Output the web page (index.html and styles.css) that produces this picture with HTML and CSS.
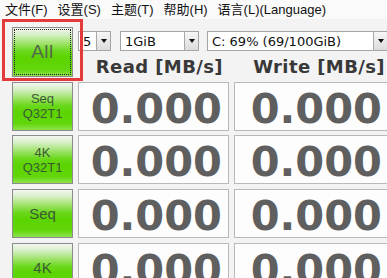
FILE: index.html
```html
<!DOCTYPE html>
<html>
<head>
<meta charset="utf-8">
<link rel="stylesheet" href="styles.css">
</head>
<body>
<div class="menubar">
  <span class="mi">文件(F)</span>
  <span class="mi">设置(S)</span>
  <span class="mi">主题(T)</span>
  <span class="mi">帮助(H)</span>
  <span class="mi">语言(L)(Language)</span>
</div>
<div class="bench">
  <div class="btn all"><span>All</span></div>
  <div class="toolbar">
    <div class="combo c1"><span class="ctext">5</span><span class="arrow"></span></div>
    <div class="combo c2"><span class="ctext">1GiB</span><span class="arrow"></span></div>
    <div class="combo c3"><span class="ctext">C: 69% (69/100GiB)</span><span class="arrow"></span></div>
  </div>
  <div class="hdr hread">Read [MB/s]</div>
  <div class="hdr hwrite">Write [MB/s]</div>

  <div class="btn two"><span>Seq<br>Q32T1</span></div>
  <div class="val vread">0.000</div>
  <div class="val vwrite">0.000</div>

  <div class="btn two"><span>4K<br>Q32T1</span></div>
  <div class="val vread">0.000</div>
  <div class="val vwrite">0.000</div>

  <div class="btn one"><span>Seq</span></div>
  <div class="val vread">0.000</div>
  <div class="val vwrite">0.000</div>

  <div class="btn one"><span>4K</span></div>
  <div class="val vread">0.000</div>
  <div class="val vwrite">0.000</div>
</div>
<div class="annot"></div>
</body>
</html>
```

FILE: styles.css
```css
html, body {
  margin: 0;
  padding: 0;
}
body {
  width: 387px;
  height: 278px;
  overflow: hidden;
  background: #f3f3f3;
  position: relative;
  font-family: "DejaVu Sans", sans-serif;
}
.menubar {
  height: 19px;
  background: #fafafa;
  display: flex;
  gap: 10px;
  padding-left: 5px;
  font-family: "Liberation Sans", "Noto Sans CJK SC", sans-serif;
  font-size: 13px;
  line-height: 19px;
  color: #111;
}
.bench {
  display: grid;
  grid-template-columns: 61px 151px 160px;
  grid-template-rows: 24px 21.33px 49px 49px 49px 49px;
  column-gap: 5px;
  row-gap: 4.67px;
  margin-left: 12px;
  margin-top: 8px;
}
.btn {
  box-sizing: border-box;
  border: 1px solid #8c8c8c;
  background: linear-gradient(to bottom, #f3f7f1 0%, #d6efc6 14%, #9fe36a 32%, #6ad81c 48%, #5cd400 62%, #62d60a 86%, #8de24c 100%);
  display: flex;
  align-items: center;
  justify-content: center;
  text-align: center;
  font-family: "Liberation Sans", sans-serif;
  color: #3b5a34;
  position: relative;
}
.all {
  grid-row: 1 / 3;
  font-size: 19px;
  color: #52694b;
  letter-spacing: 0.5px;
}
.all::after {
  content: "";
  position: absolute;
  inset: 1px;
  border: 1px dotted #222;
}
.two {
  font-size: 13px;
  line-height: 15px;
}
.one {
  font-size: 15px;
}
.toolbar {
  grid-column: 2 / 4;
  display: flex;
  align-items: flex-end;
  gap: 9px;
}
.combo {
  box-sizing: border-box;
  height: 20px;
  background: #fff;
  border: 1px solid #a4a4a4;
  display: flex;
  align-items: center;
  justify-content: space-between;
  font-family: "DejaVu Sans", sans-serif;
  font-size: 13px;
  color: #111;
  overflow: hidden;
}
.c1 { width: 33px; }
.c2 { width: 79px; margin-right: -1px; }
.c3 { width: 181px; }
.ctext {
  padding-left: 4px;
  white-space: nowrap;
}
.arrow {
  box-sizing: border-box;
  width: 14px;
  height: 18px;
  border-left: 1px solid #a8a8a8;
  background: linear-gradient(to bottom, #f6f6f6, #dcdcdc);
  display: flex;
  align-items: center;
  justify-content: center;
  flex: none;
}
.arrow::before {
  content: "";
  width: 0;
  height: 0;
  border-left: 3.5px solid transparent;
  border-right: 3.5px solid transparent;
  border-top: 4px solid #111;
}
.hdr {
  font-family: "DejaVu Sans", sans-serif;
  font-weight: bold;
  font-size: 18px;
  letter-spacing: 0.4px;
  line-height: 21.33px;
  color: #383838;
  text-align: right;
  white-space: nowrap;
}
.hread { padding-right: 6px; }
.hwrite { padding-right: 9px; }
.val {
  box-sizing: border-box;
  height: 49px;
  background: #fdfdfd;
  border: 1px solid #b9b9b9;
  font-family: "DejaVu Sans", sans-serif;
  font-weight: bold;
  font-size: 41.5px;
  line-height: 47px;
  padding-top: 2px;
  color: #5f5f5f;
  text-align: right;
  white-space: nowrap;
}
.vread { padding-right: 6px; }
.vwrite { padding-right: 11px; }
.annot {
  position: absolute;
  left: 2px;
  top: 19px;
  width: 81px;
  height: 62px;
  box-sizing: border-box;
  border: 3.5px solid #e53a3c;
}
```
